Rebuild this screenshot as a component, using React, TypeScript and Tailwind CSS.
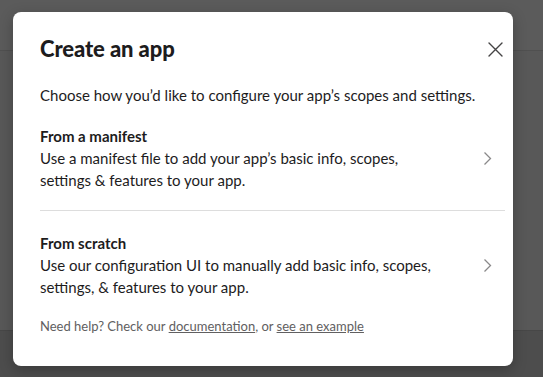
import React from "react";

const font = { fontFamily: "Lato, 'Noto Sans', sans-serif" };

// Thin grey chevron used on each option row
const Chevron = () => (
  <svg width="9" height="15" viewBox="0 0 9 15" fill="none" className="shrink-0">
    <polyline points="1.5,1.5 7.5,7.5 1.5,13.5" stroke="#8a898a" strokeWidth="1.3" fill="none" />
  </svg>
);

const CloseIcon = () => (
  <svg width="15" height="15" viewBox="0 0 15 15" fill="none">
    <path d="M1 1 L14 14 M14 1 L1 14" stroke="#454445" strokeWidth="1.4" strokeLinecap="round" />
  </svg>
);

type Option = { title: string; lines: string };

const options: Option[] = [
  {
    title: "From a manifest",
    lines: "Use a manifest file to add your app’s basic info, scopes, settings & features to your app.",
  },
  {
    title: "From scratch",
    lines: "Use our configuration UI to manually add basic info, scopes, settings, & features to your app.",
  },
];

export default function App() {
  return (
    <div className="relative h-[377px] w-[543px] overflow-hidden flex flex-col" style={font}>
      {/* dimmed page behind the modal */}
      <div className="h-[51px] bg-[#5b5b5b] border-b border-[#505050]" />
      <div className="flex-1 bg-[#585858]" />
      <div className="h-[47px] bg-[#4d4d4d] border-t border-[#474747]" />

      {/* modal */}
      <div className="absolute left-[13px] top-[12px] w-[500px] h-[354px] bg-white rounded-lg shadow-[0_4px_14px_rgba(0,0,0,0.25)] pl-[27px] pr-[8px] pt-[23px] text-[#1d1c1d]">
        <div className="flex items-center justify-between h-[28px] -mr-[4px]">
          <h1 className="text-[22px] leading-[28px] font-black tracking-[-0.1px]">Create an app</h1>
          <button className="w-[28px] h-[28px] flex items-center justify-center">
            <CloseIcon />
          </button>
        </div>

        <p className="mt-[21px] text-[15px] leading-[22px]">
          Choose how you’d like to configure your app’s scopes and settings.
        </p>

        <div className="mt-[19px]">
          {options.map((o, i) => (
            <div
              key={o.title}
              className={
                i === 0
                  ? "flex items-center justify-between pb-[19px] border-b border-[#dddddd] pr-[13px]"
                  : "flex items-center justify-between pt-[21px] pr-[13px]"
              }
            >
              <div className="w-[408px] text-[15px] leading-[22px]">
                <div className="font-bold">{o.title}</div>
                <div>{o.lines}</div>
              </div>
              <Chevron />
            </div>
          ))}
        </div>

        <p className="mt-[19px] text-[13px] leading-[18px] text-[#616061]">
          Need help? Check our <span className="underline">documentation</span>, or{" "}
          <span className="underline">see an example</span>
        </p>
      </div>
    </div>
  );
}
